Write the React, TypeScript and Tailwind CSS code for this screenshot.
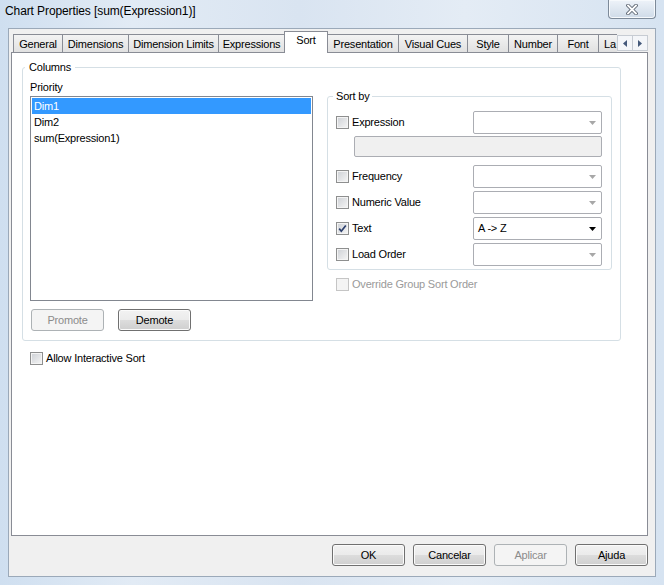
import React from "react"

const tabs = [
    {label: "General", w: "w-[50px]"},
    {label: "Dimensions", w: "w-[67px]"},
    {label: "Dimension Limits", w: "w-[91px]"},
    {label: "Expressions", w: "w-[67px]"},
    {label: "Sort", w: "w-[44px]", active: true},
    {label: "Presentation", w: "w-[72px]"},
    {label: "Visual Cues", w: "w-[70px]"},
    {label: "Style", w: "w-[42px]"},
    {label: "Number", w: "w-[50px]"},
    {label: "Font", w: "w-[42px]"},
]

function Check({checked, disabled}: {checked?: boolean; disabled?: boolean}) {
    return (
        <span
            className={`flex h-[13px] w-[13px] shrink-0 items-center justify-center border ${
                disabled
                    ? "border-[#c5c5c5] bg-[#f4f4f4]"
                    : "border-[#8e8f8f] bg-linear-to-br from-[#cdd0d5] to-[#f6f6f6] shadow-[inset_0_0_0_1px_#f4f4f4]"
            }`}
        >
            {checked && (
                <svg width="11" height="11" viewBox="0 0 11 11">
                    <path d="M2.2 5.6 L4.3 8.2 L8.8 2.4" fill="none" stroke="#2c3f6c" strokeWidth="1.7" />
                </svg>
            )}
        </span>
    )
}

function Combo({value, enabled}: {value?: string; enabled?: boolean}) {
    return (
        <div className="flex h-[23px] w-[129px] shrink-0 items-center justify-between rounded-[2px] border border-[#abadb3] bg-white pl-[4px] pr-[5px]">
            <span>{value}</span>
            <svg width="7" height="4" viewBox="0 0 7 4">
                <path d="M0 0H7L3.5 4Z" fill={enabled ? "#000" : "#a7a7a7"} />
            </svg>
        </div>
    )
}

function SortRow({label, value, checked, enabled, className}: {label: string; value?: string; checked?: boolean; enabled?: boolean; className?: string}) {
    return (
        <div className={`flex h-[23px] items-center justify-between ${className ?? ""}`}>
            <div className="flex items-center gap-[3px]">
                <Check checked={checked} />
                <span>{label}</span>
            </div>
            <Combo value={value} enabled={enabled} />
        </div>
    )
}

function Btn({label, disabled}: {label: string; disabled?: boolean}) {
    return (
        <div
            className={`flex h-[22px] w-[73px] items-center justify-center rounded-[3px] border ${
                disabled
                    ? "border-[#adb2b5] bg-[#f4f4f4] text-[#8b8b8b]"
                    : "border-[#707070] bg-[linear-gradient(#f2f2f2_0%,#ebebeb_50%,#dddddd_50%,#cfcfcf_100%)] text-black shadow-[inset_0_0_0_1px_#fbfbfb]"
            }`}
        >
            {label}
        </div>
    )
}

export default function App() {
    return (
        <div className="h-[585px] w-[664px] overflow-hidden bg-[linear-gradient(90deg,#cfdff0_0%,#e2ebf5_20%,#d9e4f1_45%,#e4ecf5_70%,#d6e3f1_100%)] font-['Liberation_Sans',Arial,sans-serif] text-[11px] leading-[13px] tracking-[-0.2px] text-black">
            {/* title bar */}
            <div className="flex h-[28px] items-start justify-between">
                <span className="pl-[5px] pt-[4px] text-[12px] leading-[14px] tracking-[-0.1px]">Chart Properties [sum(Expression1)]</span>
                <div className="mr-[8px] flex h-[19px] w-[48px] items-center justify-center rounded-b-[4px] border border-t-0 border-[#7d8a99] bg-linear-to-b from-[#eef3f9] to-[#cfdbe8] shadow-[inset_0_0_0_1px_#f6f9fc]">
                    <svg width="12" height="11" viewBox="0 0 12 11">
                        <path d="M2 1.5 L10 9.5 M10 1.5 L2 9.5" stroke="#5d6672" strokeWidth="3.6" strokeLinecap="square" />
                        <path d="M2 1.5 L10 9.5 M10 1.5 L2 9.5" stroke="#ffffff" strokeWidth="1.8" strokeLinecap="square" />
                    </svg>
                </div>
            </div>

            {/* client */}
            <div className="ml-[8px] h-[549px] w-[648px] border border-[#9ba9b9] bg-[#f0f0f0] pt-[2px]">
                <div className="ml-[2px] w-[637px]">
                    {/* tabs */}
                    <div className="flex h-[21px] items-end pl-[2px]">
                        {tabs.map((t, i) =>
                            t.active ? (
                                <div
                                    key={t.label}
                                    className={`relative z-10 -ml-px mb-[-1px] flex h-[22px] ${t.w} shrink-0 justify-center border border-b-0 border-[#898c95] bg-white pt-[2px]`}
                                >
                                    {t.label}
                                </div>
                            ) : (
                                <div
                                    key={t.label}
                                    className={`${i > 0 ? "-ml-px" : ""} flex h-[18px] ${t.w} shrink-0 justify-center border border-b-0 border-[#898c95] bg-linear-to-b from-[#f3f3f3] to-[#e1e1e1] pt-[3px]`}
                                >
                                    {t.label}
                                </div>
                            )
                        )}
                        <div className="-ml-px flex h-[18px] w-[19px] shrink-0 overflow-hidden border border-b-0 border-r-0 border-[#898c95] bg-linear-to-b from-[#f3f3f3] to-[#e1e1e1] pl-[5px] pt-[3px]">
                            <span className="whitespace-nowrap">La</span>
                        </div>
                        <div className="mb-[1px] flex h-[16px] shrink-0">
                            <div className="flex h-[16px] w-[16px] items-center justify-center border border-[#c7ccd3] bg-[#f4f6f9]">
                                <svg width="4" height="7" viewBox="0 0 4 7">
                                    <path d="M4 0V7L0 3.5Z" fill="#44597a" />
                                </svg>
                            </div>
                            <div className="-ml-px flex h-[16px] w-[16px] items-center justify-center border border-[#c7ccd3] bg-[#f4f6f9]">
                                <svg width="4" height="7" viewBox="0 0 4 7">
                                    <path d="M0 0V7L4 3.5Z" fill="#44597a" />
                                </svg>
                            </div>
                        </div>
                    </div>

                    {/* panel */}
                    <div className="h-[484px] border border-[#898c95] bg-white">
                        <fieldset className="ml-[10px] mt-[8px] w-[599px] rounded-[3px] border border-[#d5dfe5] pb-[9px] pl-[2px]">
                            <legend className="px-[4px] leading-[13px]">Columns</legend>
                            <div className="flex items-start">
                                {/* priority */}
                                <div className="ml-[5px] w-[283px] shrink-0">
                                    <div className="mt-[7px]">Priority</div>
                                    <div className="mt-[2px] h-[205px] border border-[#828790] bg-white p-px">
                                        <div className="h-[16px] bg-[#3399ff] pl-[2px] leading-[16px] text-white">Dim1</div>
                                        <div className="h-[16px] pl-[2px] leading-[16px]">Dim2</div>
                                        <div className="h-[16px] pl-[2px] leading-[16px]">sum(Expression1)</div>
                                    </div>
                                    <div className="ml-[1px] mt-[8px] flex gap-[14px]">
                                        <Btn label="Promote" disabled />
                                        <Btn label="Demote" />
                                    </div>
                                </div>

                                {/* sort by */}
                                <div className="ml-[14px] w-[285px] shrink-0">
                                    <fieldset className="mt-[16px] rounded-[3px] border border-[#d5dfe5] pb-[3px] pl-[5px] pr-[9px]">
                                        <legend className="px-[3px] leading-[13px]">Sort by</legend>
                                        <div className="pl-[3px] pt-[8px]">
                                            <SortRow label="Expression" />
                                            <div className="ml-[18px] mt-[2px] h-[21px] rounded-[2px] border border-[#abadb3] bg-[#f0f0f0]" />
                                            <SortRow label="Frequency" className="mt-[8px]" />
                                            <SortRow label="Numeric Value" className="mt-[3px]" />
                                            <SortRow label="Text" value="A -> Z" checked enabled className="mt-[3px]" />
                                            <SortRow label="Load Order" className="mt-[3px]" />
                                        </div>
                                    </fieldset>
                                    <div className="ml-[9px] mt-[8px] flex items-center gap-[3px] text-[#9a9a9a]">
                                        <Check disabled />
                                        <span>Override Group Sort Order</span>
                                    </div>
                                </div>
                            </div>
                        </fieldset>

                        <div className="ml-[18px] mt-[11px] flex items-center gap-[3px]">
                            <Check />
                            <span>Allow Interactive Sort</span>
                        </div>
                    </div>

                    {/* dialog buttons */}
                    <div className="mt-[8px] flex justify-end gap-[8px]">
                        <Btn label="OK" />
                        <Btn label="Cancelar" />
                        <Btn label="Aplicar" disabled />
                        <Btn label="Ajuda" />
                    </div>
                </div>
            </div>
        </div>
    )
}
